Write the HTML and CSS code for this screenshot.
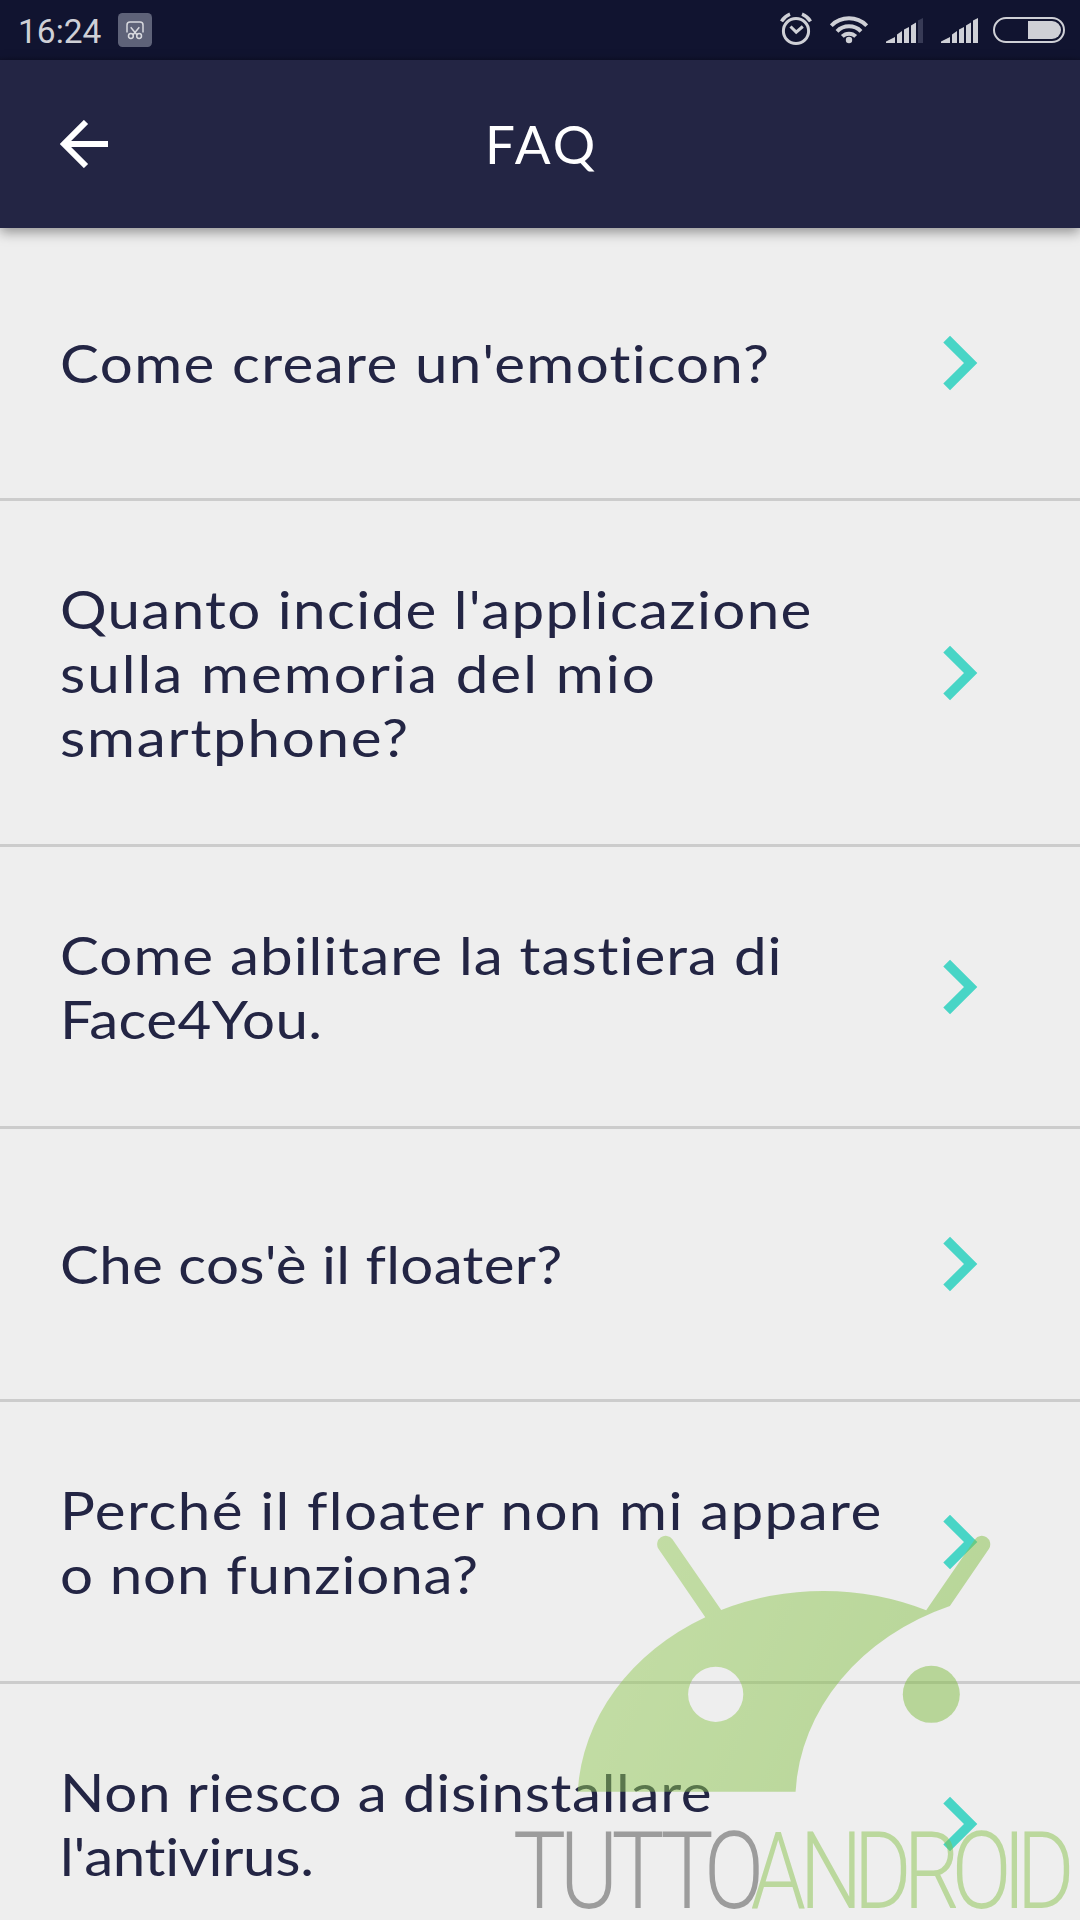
FILE: index.html
```html
<!DOCTYPE html>
<html lang="it">
<head>
<meta charset="utf-8">
<title>FAQ</title>
<link rel="stylesheet" href="styles.css">
</head>
<body>
<svg class="defs" width="0" height="0" aria-hidden="true">
  <symbol id="chevron" viewBox="0 0 36 56"><path d="M8 .8L35.3 28 8 55.2 1.3 48.5 22 28 1.3 7.5z" fill="#48d5c6"/></symbol>
</svg>
<div class="status">
  <span class="clock">16:24</span>
  <svg class="badge" width="34" height="34" viewBox="0 0 34 34" fill="none" stroke="#d8d9de" stroke-width="1.5">
    <rect width="34" height="34" rx="4.5" fill="#5e6278" stroke="none"/>
    <path d="M9 19.5V12q0-3 3-3h10q3 0 3 3v7.5M12.7 14.3l6.6 8M21.3 14.3l-6.6 8"/>
    <circle cx="12.9" cy="23" r="2.4"/><circle cx="21.1" cy="23" r="2.4"/>
  </svg>
  <div class="indicators">
    <svg width="32" height="34" viewBox="0 0 32 34" fill="none" stroke="#cfd0d6" stroke-width="3">
      <circle cx="16" cy="19" r="12.6"/><path d="M10.5 14.5l5.7 5.6 6.6-5.6"/><path d="M1.5 9.4q3-5 8.5-7.2M30.5 9.4q-3-5-8.5-7.2" stroke-width="3.4"/>
    </svg>
    <svg width="38" height="34" viewBox="0 0 38 34" fill="none" stroke="#cfd0d6" stroke-width="4">
      <path d="M1.3 13.7a25 25 0 0 1 35.4 0M7 19.3a17 17 0 0 1 24 0M12.3 24.4a9.5 9.5 0 0 1 13.4 0"/><circle cx="19" cy="28" r="3.2" fill="#cfd0d6" stroke="none"/>
    </svg>
    <svg width="37" height="34" viewBox="0 0 37 34" fill="#cfd0d6">
      <path d="M0 31v-1.5L9 25v6zM11 31V22.5L16 19v12zM18 31V17.5L23 15v16zM25 31V13.5L30 10.5V31z"/><path d="M32 31V8.5L37 6V31z" fill="#373a55"/>
    </svg>
    <svg width="37" height="34" viewBox="0 0 37 34" fill="#cfd0d6">
      <path d="M0 31v-1.5L9 25v6zM11 31V22.5L16 19v12zM18 31V17.5L23 15v16zM25 31V13.5L30 10.5V31zM32 31V8.5L37 6V31z"/>
    </svg>
    <svg class="battery" width="72" height="34" viewBox="0 0 72 34">
      <rect x="1" y="6" width="70" height="24" rx="12" fill="none" stroke="#cfd0d6" stroke-width="2"/><path d="M35 9h24a9 9 0 0 1 0 18H35z" fill="#cfd0d6"/>
    </svg>
  </div>
</div>
<header class="bar">
  <svg class="back" width="48" height="48" viewBox="0 0 48 48" fill="none" stroke="#fff" stroke-width="6"><path d="M48 24H6M26 2 L4 24 L26 46"/></svg>
  <h1>FAQ</h1>
</header>
<main class="list">
  <div class="row"><p><span class="q1">Come creare un'emoticon?</span></p><svg class="chev"><use href="#chevron"/></svg></div>
  <div class="row"><p><span class="q2a">Quanto incide l'applicazione</span><span class="q2b">sulla memoria del mio</span><span class="q2c">smartphone?</span></p><svg class="chev"><use href="#chevron"/></svg></div>
  <div class="row"><p><span class="q3a">Come abilitare la tastiera di</span><span class="q3b">Face4You.</span></p><svg class="chev"><use href="#chevron"/></svg></div>
  <div class="row"><p><span class="q4">Che cos'è il floater?</span></p><svg class="chev"><use href="#chevron"/></svg></div>
  <div class="row"><p><span class="q5a">Perché il floater non mi appare</span><span class="q5b">o non funziona?</span></p><svg class="chev"><use href="#chevron"/></svg></div>
  <div class="row"><p><span class="q6a">Non riesco a disinstallare</span><span class="q6b">l'antivirus.</span></p><svg class="chev"><use href="#chevron"/></svg></div>
</main>
<svg class="watermark" width="580" height="420" viewBox="500 1500 580 420">
  <defs>
    <linearGradient id="green" gradientUnits="userSpaceOnUse" x1="580" y1="1640" x2="960" y2="1790"><stop offset="0" stop-color="#98cc5c"/><stop offset="1" stop-color="#80bd42"/></linearGradient>
    <clipPath id="cut"><path d="M500 1820H776.5L749 1920H500z"/></clipPath>
  </defs>
  <g opacity=".5">
    <path fill="url(#green)" fill-rule="evenodd" d="M577.7 1791.7A246.3 210.8 0 0 1 705.3 1617.3L658.4 1548.8A8.5 8.5 0 0 1 672.4 1539.2L721.2 1610A246.3 210.8 0 0 1 926.2 1610.3L975 1539.2A8.5 8.5 0 0 1 989 1548.8L949.9 1606A246.3 210.8 0 0 0 795.6 1791.7ZM743.3 1694.3a27.6 27.6 0 1 0-55.2 0a27.6 27.6 0 1 0 55.2 0z"/>
    <circle cx="931.3" cy="1694.3" r="28.5" fill="#80bd42"/>
    <g clip-path="url(#cut)"><text class="brand" transform="scale(.82 1)" y="1908" x="625.6 682.6 745.7 805.5 858.5" fill="#4a4a4a">TUTTO</text></g>
    <text class="brand" transform="scale(.82 1)" y="1908" x="915.2 975 1040.9 1101.8 1160.4 1222.6 1239.6" fill="#88c24c">ANDROID</text>
  </g>
</svg>
</body>
</html>
```
FILE: styles.css
```css
* { box-sizing: border-box; }
body {
  margin: 0;
  width: 1080px;
  height: 1920px;
  overflow: hidden;
  position: relative;
  background: #eeeeee;
  color: #232544;
  font-family: Lato, "Open Sans", sans-serif;
}
svg { display: block; flex: none; }
.defs { position: absolute; }
.status {
  height: 60px;
  padding: 0 15px 0 18px;
  display: flex;
  align-items: center;
  background: linear-gradient(#111430 56px, #0f112a);
}
.clock {
  width: 100px;
  padding-top: 3px;
  font: 400 33.5px/40px Roboto, sans-serif;
  color: #cfd0d6;
}
.indicators {
  margin-left: auto;
  display: flex;
  gap: 18px;
  padding-bottom: 2px;
}
.battery { margin-left: -3px; }
.bar {
  position: relative;
  z-index: 1;
  height: 168px;
  display: grid;
  grid-template-columns: 168px 1fr 168px;
  align-items: center;
  background: #232544;
  box-shadow: 0 4px 12px rgba(0, 0, 0, .4);
}
.back { margin-left: 60px; }
h1 {
  margin: 0;
  padding-left: 3px;
  text-align: center;
  color: #fff;
  font: 400 53px/64px Lato, sans-serif;
  letter-spacing: 3px;
}
.row {
  display: flex;
  align-items: center;
  justify-content: space-between;
  min-height: 273px;
  padding: 75.5px 102px 75.5px 59.5px;
  border-bottom: 3px solid #cccccc;
}
.row p {
  margin: 0;
  font-size: 53px;
  font-weight: 400;
  line-height: 64px;
  white-space: nowrap;
}
.row span {
  display: block;
  transform: scaleX(1.1);
  transform-origin: left;
}
.chev { width: 36px; height: 56px; }
.q1 { letter-spacing: 1.25px; }
.q2a { letter-spacing: 1.2px; }
.q2b { letter-spacing: 1.8px; }
.q2c { letter-spacing: 1.59px; }
.q3a { letter-spacing: .9px; }
.q3b { letter-spacing: .35px; }
.q4 { letter-spacing: .26px; }
.q5a { letter-spacing: 1.27px; }
.q5b { letter-spacing: .78px; }
.q6a { letter-spacing: .59px; }
.q6b { letter-spacing: -.3px; }
.watermark {
  position: absolute;
  z-index: 2;
  left: 500px;
  top: 1500px;
}
.brand {
  font-family: Roboto, sans-serif;
  font-size: 108.3px;
  font-weight: 280;
}
```
